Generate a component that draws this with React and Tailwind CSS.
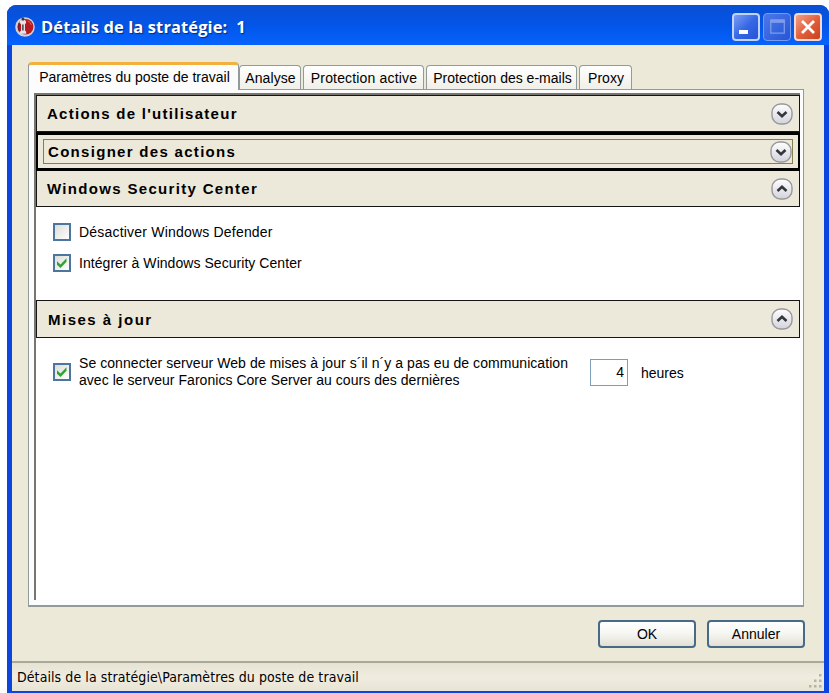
import React, { useState } from 'react';

// ─── Data ─────────────────────────────────────────────────────────────────────

const TABS = [
  { label: 'Analyse', box: 'w-[62px]', text: 'tracking-[0.1px]' },
  { label: 'Protection active', box: 'w-[121px]', text: 'tracking-[0.17px]' },
  { label: 'Protection des e-mails', box: 'w-[151px]', text: 'pl-px' },
  { label: 'Proxy', box: 'w-[53px]', text: '' },
];

// ─── Icons ────────────────────────────────────────────────────────────────────

function AppIcon() {
  return (
    <svg className="w-5 h-5 shrink-0" viewBox="0 0 20 20">
      <circle cx="10" cy="10" r="9.8" fill="#d4ced8" />
      <circle cx="10.6" cy="9.8" r="7.8" fill="#b81a20" />
      <path d="M4.6 4.6A8 8 0 0 0 4.6 15.4z" fill="#7d1c2a" />
      <path d="M4.6 4.4 6 3h4l1 1.2v2L10 7v6.6l1.2 1.2v2H5v-2L6 13.600V7L4.600 6z" fill="#e6e2e6" />
      <path d="M6.6.8h2.600v2.6H6.6zM7.200 7.400h1.400v6H7.200z" fill="#3a3540" />
      <path d="M12.6 4a6 6 0 0 1 3.8 4" stroke="#dc5c5c" strokeWidth="1" fill="none" />
    </svg>
  );
}

function ExpandIcon({ open }) {
  return (
    <svg className="w-[22px] h-[22px] shrink-0" viewBox="0 0 22 22">
      <defs>
        <linearGradient id="knob" x1="0" y1="0" x2="0" y2="1">
          <stop offset="0" stopColor="#ffffff" />
          <stop offset="1" stopColor="#d3d3dc" />
        </linearGradient>
      </defs>
      <rect x="1" y="1" width="20" height="20" rx="8.5" fill="url(#knob)" stroke="#98989c" strokeWidth="1.4" />
      <path
        d={open ? 'M6.5 13 11 8.8l4.5 4.2' : 'M6.5 9 11 13.2 15.5 9'}
        fill="none"
        stroke="#35353c"
        strokeWidth="2.6"
      />
    </svg>
  );
}

function Grip() {
  return (
    <svg className="w-[14px] h-[14px]" viewBox="0 0 14 14" fill="#b8b4a2">
      <path d="M11 0h2.5v2.5H11zM6 5.5h2.5V8H6zM11 5.5h2.5V8H11zM1 11h2.5v2.5H1zM6 11h2.5v2.5H6zM11 11h2.5v2.5H11z" />
    </svg>
  );
}

// ─── Controls ─────────────────────────────────────────────────────────────────

function CaptionButtons() {
  return (
    <div className="flex gap-[3px]">
      <button className="w-7 h-7 rounded-[4px] border-2 border-[#c3d2f7] bg-linear-to-br from-[#7d9cf3] via-[#3668e6] to-[#2553d4]">
        <svg className="w-full h-full" viewBox="0 0 24 24">
          <path d="M5 15h9v4H5z" fill="#fff" />
        </svg>
      </button>
      <button className="w-7 h-7 rounded-[4px] border-[1.5px] border-[#7799ee] bg-linear-to-br from-[#4d78ea] to-[#2555d6]">
        <svg className="w-full h-full" viewBox="0 0 25 25">
          <path d="M6.5 6.5h13v12h-13z" fill="none" stroke="#7f9cea" strokeWidth="1.2" />
          <path d="M6 5h14v3.5H6z" fill="#7f9cea" />
        </svg>
      </button>
      <button className="w-7 h-7 rounded-[4px] border-2 border-[#f3d9d4] bg-linear-to-br from-[#f0a088] via-[#e2603c] to-[#c9401c]">
        <svg className="w-full h-full" viewBox="0 0 24 24">
          <path d="M6 6l12 12m0-12L6 18" stroke="#fff" strokeWidth="2.8" fill="none" />
        </svg>
      </button>
    </div>
  );
}

function CheckBox({ checked, onChange }) {
  return (
    <button
      role="checkbox"
      aria-checked={checked}
      onClick={onChange}
      className="w-[18px] h-[18px] shrink-0 border-2 border-[#4d769e] bg-linear-to-br from-[#dcdcd7] to-white"
    >
      {checked && (
        <svg className="w-full h-full" viewBox="0 0 14 14">
          <path d="M2 5.2 5.5 8.5l6-6.3v3.6L5.5 12 2 8.8z" fill="#2fa32f" />
        </svg>
      )}
    </button>
  );
}

function PushButton({ children }) {
  return (
    <button className="w-[98px] h-7 rounded-[4px] border-2 border-[#466a88] bg-linear-to-b from-white via-[#f5f5f1] to-[#e2dfd4] text-[14px] leading-none">
      {children}
    </button>
  );
}

function SectionHeader({ title, open, textClass, className = 'h-[36px]' }) {
  return (
    <div className={`flex items-center justify-between border-b-[1.5px] border-r-[1.5px] border-l border-[#151515] bg-[#ece8da] pl-[10px] pr-[6px] ${className}`}>
      <h2 className={`text-[15px] font-bold leading-none whitespace-pre ${textClass}`}>{title}</h2>
      <ExpandIcon open={open} />
    </div>
  );
}

// ─── Window ───────────────────────────────────────────────────────────────────

export default function App() {
  const [defender, setDefender] = useState(false);
  const [center, setCenter] = useState(true);
  const [updates, setUpdates] = useState(true);

  return (
    <div className="w-[829px] h-[693px] overflow-hidden bg-white pl-[7px] pt-[5px] font-['Liberation_Sans',sans-serif] text-[14px] text-black">
      <div className="flex h-full flex-col rounded-t-[9px] bg-[#0a45e0]">
        {/* Title bar */}
        <div className="flex h-10 shrink-0 items-center justify-between rounded-t-[9px] bg-linear-to-b from-[#0a4fd2] via-[#0355e8] to-[#0563fd] pl-2 pr-[7px] pt-[3px]">
          <div className="flex items-center gap-[6px]">
            <AppIcon />
            <h1 className="whitespace-pre pt-[2px] font-['Open_Sans',sans-serif] text-[16.5px] font-bold leading-none tracking-[0.1px] text-white [text-shadow:1px_1px_1px_#0a2a80]">
              {'Détails de la stratégie:  1'}
            </h1>
          </div>
          <CaptionButtons />
        </div>

        {/* Client area */}
        <div className="mb-[2px] ml-[5px] mr-[5px] flex min-h-0 flex-1 flex-col bg-[#ece9d8]">
          <div className="flex h-[562px] shrink-0 flex-col pl-[16px] pr-[20px] pt-[17px]">
            <div className="flex h-[27px] shrink-0 items-end">
              <div className="z-10 -mb-px flex h-[28px] w-[211px] items-center justify-center rounded-t-[4px] border-x border-t-[3px] border-x-[#919b9c] border-t-[#f2b13c] bg-[#fcfcfc] pb-[2px] pl-[2px] leading-none">
                <span className="whitespace-pre">Paramètres du poste de travail</span>
              </div>
              <div className="flex gap-[2px]">
                {TABS.map((tab) => (
                  <div
                    key={tab.label}
                    className={`flex h-6 items-center justify-center rounded-t-[4px] border border-b-0 border-[#919b9c] bg-linear-to-b from-white to-[#f0efe8] pl-px leading-none whitespace-pre ${tab.box}`}
                  >
                    <span className={tab.text}>{tab.label}</span>
                  </div>
                ))}
              </div>
            </div>

            <div className="flex h-[518px] shrink-0 flex-col border border-[#919b9c] border-b-2 bg-[#fcfcfc] pb-[5px] pl-[5px] pr-[3px] pt-[3px]">
              <div className="flex-1 border-l-2 border-t-2 border-[#77756f] bg-white">
                <SectionHeader title="Actions de l'utilisateur" textClass="tracking-[1.27px]" className="h-[37px] border-t" />
                <div className="h-[39px] border-x-2 border-y-[3px] border-black bg-[#ece8da] pb-[4px] pl-[5px] pr-[5px] pt-[4px]">
                  <div className="flex h-full items-center justify-between border border-[#84804e] pl-[4px]">
                    <h2 className="text-[15px] font-bold leading-none tracking-[1.3px]">Consigner des actions</h2>
                    <ExpandIcon />
                  </div>
                </div>
                <SectionHeader title="Windows Security Center" textClass="tracking-[1.32px]" open />

                <div className="flex h-[93px] flex-col gap-[13px] pl-[17px] pt-[16px]">
                  <div className="flex items-center gap-[8px] leading-none">
                    <CheckBox checked={defender} onChange={() => setDefender(!defender)} />
                    <span className="tracking-[0.2px]">Désactiver Windows Defender</span>
                  </div>
                  <div className="flex items-center gap-[8px] leading-none">
                    <CheckBox checked={center} onChange={() => setCenter(!center)} />
                    <span className="tracking-[0.05px]">Intégrer à Windows Security Center</span>
                  </div>
                </div>

                <SectionHeader title="Mises à jour" textClass="pl-px tracking-[1.5px]" className="h-[38px] border-t-[1.5px]" open />

                <div className="flex items-center pl-[17px] pt-[17px]">
                  <CheckBox checked={updates} onChange={() => setUpdates(!updates)} />
                  <div className="ml-[8px] w-[511px] whitespace-pre leading-[17px]">
                    <p className="tracking-[0.06px]">Se connecter serveur Web de mises à jour s´il n´y a pas eu de communication</p>
                    <p className="tracking-[0.04px]">avec le serveur Faronics Core Server au cours des dernières</p>
                  </div>
                  <div className="flex h-[27px] w-[38px] items-center justify-end border border-[#7f9db9] bg-white pr-[3px]">4</div>
                  <span className="ml-[13px] pt-[2px]">heures</span>
                </div>
              </div>
            </div>
          </div>

          <div className="flex flex-1 justify-end gap-[11px] pr-[19px] pt-[13px]">
            <PushButton>OK</PushButton>
            <PushButton>Annuler</PushButton>
          </div>

          {/* Status bar */}
          <div className="flex h-[30px] shrink-0 items-center justify-between border-t-2 border-[#aaa899] bg-linear-to-b from-[#e6e3d4] via-[#f0ede0] to-[#e8e4d4] pl-[5px] pr-[2px]">
            <span className="whitespace-pre font-['DejaVu_Sans_Condensed','DejaVu_Sans',sans-serif] text-[14px] tracking-[0.08px]">
              Détails de la stratégie\Paramètres du poste de travail
            </span>
            <div className="pt-[8px]">
              <Grip />
            </div>
          </div>
        </div>
      </div>
    </div>
  );
}
